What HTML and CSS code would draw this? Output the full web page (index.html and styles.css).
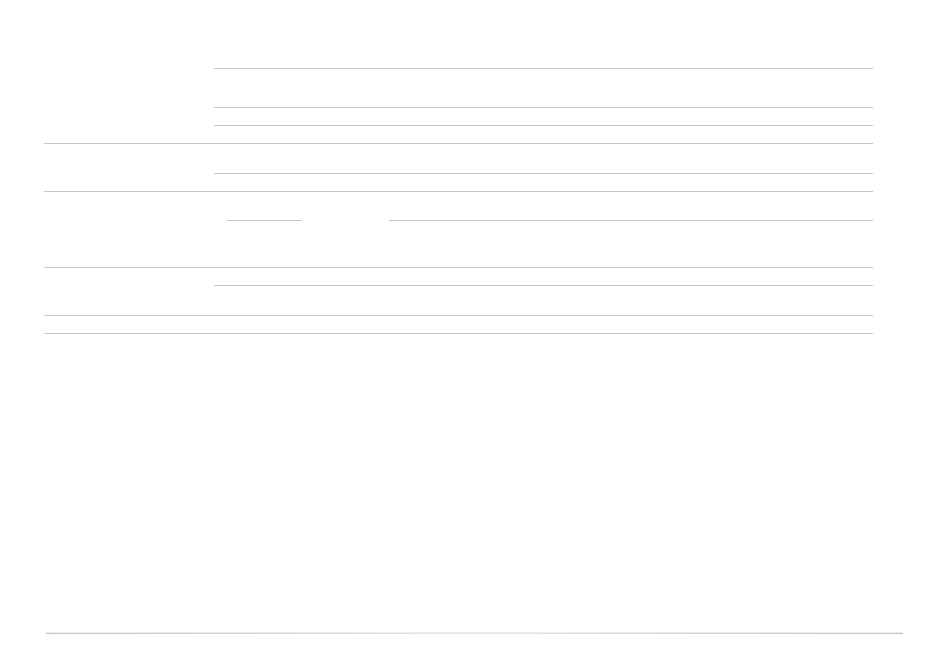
FILE: index.html
```html
<!DOCTYPE html>
<html lang="en">
<head>
    <meta charset="UTF-8">
    <meta name="viewport" content="width=device-width, initial-scale=1.0">
    <title>Form</title>
    <link rel="stylesheet" href="styles.css">
</head>
<body>
    <div class="page">
        <div class="sheet">
            <div class="group">
                <div class="label"></div>
                <div class="fields">
                    <div class="spacer"></div>
                    <div class="row row-tall"></div>
                    <div class="row row-short"></div>
                    <div class="row row-short"></div>
                </div>
            </div>

            <div class="group">
                <div class="label"></div>
                <div class="fields">
                    <div class="cell-mid"></div>
                    <div class="row row-short"></div>
                </div>
            </div>

            <div class="group">
                <div class="label"></div>
                <div class="fields fields-inputs">
                    <div class="inputs">
                        <div class="input input-small"></div>
                        <div class="input input-wide"></div>
                    </div>
                </div>
            </div>

            <div class="group">
                <div class="label"></div>
                <div class="fields">
                    <div class="cell-short"></div>
                    <div class="row row-mid"></div>
                </div>
            </div>

            <div class="group">
                <div class="label"></div>
                <div class="fields">
                    <div class="cell-short"></div>
                </div>
            </div>
        </div>

        <div class="footer">
            <div class="footer-rule"></div>
        </div>
    </div>
</body>
</html>
```

FILE: styles.css
```css
body {
    font-family: 'Liberation Sans', Arial, sans-serif;
    background-color: #fff;
    margin: 0;
    padding: 0;
    color: #333;
}

.page {
    display: flex;
    flex-direction: column;
    min-height: 100vh;
}

.sheet {
    margin-left: 44px;
    width: 829px;
}

.group {
    display: grid;
    grid-template-columns: 170px 1fr;
    border-bottom: 1px solid #c6c6c6;
}

.spacer {
    height: 68px;
}

.row {
    border-top: 1px solid #c6c6c6;
}

.row-tall {
    height: 38px;
}

.row-mid {
    height: 29px;
}

.row-short {
    height: 17px;
}

.cell-mid {
    height: 29px;
}

.cell-short {
    height: 17px;
}

.fields-inputs {
    padding: 8px 0 46px;
}

.inputs {
    display: flex;
}

.input {
    height: 20px;
    border-bottom: 1px solid #c6c6c6;
}

.input-small {
    margin-left: 13px;
    width: 75px;
}

.input-wide {
    margin-left: 87px;
    flex: 1;
}

.footer {
    margin-top: auto;
    padding: 0 47px 26px 46px;
}

.footer-rule {
    height: 1px;
    border-top: 1px solid #ececec;
    background: linear-gradient(to right, #c4c4c4, #e6e6e6 50%, #c4c4c4);
}
```
